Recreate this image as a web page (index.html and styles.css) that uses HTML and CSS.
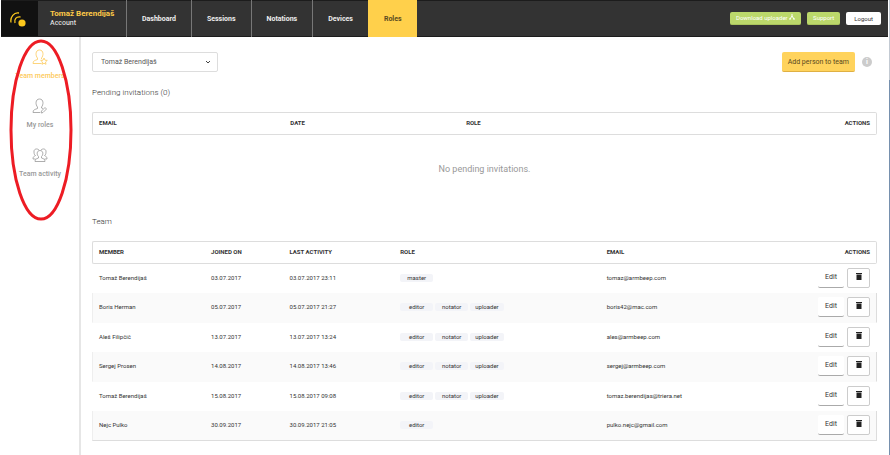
FILE: index.html
```
<!DOCTYPE html>
<html lang="en">
<head>
    <meta charset="UTF-8">
    <meta name="viewport" content="width=device-width, initial-scale=1.0">
    <title>Roles - Team members</title>
    <link rel="stylesheet" href="styles.css">
</head>
<body>
    <header class="topbar">
        <a href="#" class="logo" aria-label="Home">
            <svg width="16" height="16" viewBox="0 0 16 16" fill="none" stroke="#fcc81c">
                <circle cx="12" cy="12" r="3.6" fill="#fcc81c" stroke="none"/>
                <path d="M1 11.5C0 6 4 1 9 2" stroke-width="1.3"/>
                <path d="M5 12C4 8 6 5.5 10.5 6" stroke-width="1.3"/>
            </svg>
        </a>
        <div class="account">
            <strong>Tomaž Berendijaš</strong>
            <span>Account</span>
        </div>
        <nav class="menu">
            <a href="#">Dashboard</a>
            <a href="#">Sessions</a>
            <a href="#">Notations</a>
            <a href="#">Devices</a>
            <a href="#" class="active">Roles</a>
        </nav>
        <div class="tools">
            <button type="button" class="btn btn-green">Download uploader
                <svg width="6" height="6" viewBox="0 0 6 6" fill="none" stroke="currentColor"><path d="M3 0V2L1 5M3 2L5 5M0 5H2M4 5H6"/></svg>
            </button>
            <button type="button" class="btn btn-green">Support</button>
            <button type="button" class="btn btn-white">Logout</button>
        </div>
    </header>

    <div class="layout">
        <aside class="sidebar">
            <a href="#" class="active">
                <svg width="16" height="16" viewBox="0 0 16 16" fill="none" stroke="currentColor" stroke-width="0.8">
                    <path d="M9.5 14.5H1C1 11.5 3 11.5 5.5 10.5V9C3.5 7 3 1 7.5 1C12 1 11.5 7 9.5 9V10"/>
                    <path d="M12 9L13 11.2L15.3 11.4L13.5 13L14 15.3L12 14.2L10 15.3L10.5 13L8.7 11.4L11 11.2Z"/>
                </svg>
                <span>Team members</span>
            </a>
            <a href="#">
                <svg width="16" height="16" viewBox="0 0 16 16" fill="none" stroke="currentColor" stroke-width="0.8">
                    <path d="M8 14.5H1C1 11.5 3 11.5 5.5 10.5V9C3.5 7 3 1 7.5 1C12 1 11.5 7 9.5 9V10L11 10.5"/>
                    <path d="M9 15L9.5 13L13 9.5L14.5 11L11 14.5Z"/>
                </svg>
                <span>My roles</span>
            </a>
            <a href="#">
                <svg width="16" height="16" viewBox="0 0 16 16" fill="none" stroke="currentColor" stroke-width="0.8">
                    <path d="M3 14.5C3 12 4 12 6.5 11V9.5C4.5 8 4.5 3.5 8 3.5C11.5 3.5 11.5 8 9.5 9.5V11C12 12 13 12 13 14.5Z"/>
                    <path d="M7 3C5 1 1.5 2 2 5C2 7 2.5 8 3.5 8.5C2 9.5 1 9.5 1 12H3.5M9 3C11 1 14.5 2 14 5C14 7 13.5 8 12.5 8.5C14 9.5 15 9.5 15 12H12.5"/>
                </svg>
                <span>Team activity</span>
            </a>
        </aside>
        <svg class="marker" width="64" height="184" viewBox="0 0 64 184"><ellipse cx="32" cy="91" rx="30" ry="89"/></svg>

        <main>
            <div class="filters">
                <div class="select">
                    <select aria-label="Team">
                        <option>Tomaž Berendijaš</option>
                    </select>
                    <svg width="6" height="4" viewBox="0 0 6 4" fill="none" stroke="#444"><path d="M1 1L3 3L5 1"/></svg>
                </div>
                <button type="button" class="btn btn-yellow">Add person to team</button>
                <span class="info">i</span>
            </div>

            <h2>Pending invitations (0)</h2>
            <table class="pending">
                <thead>
                    <tr>
                        <th>Email</th>
                        <th>Date</th>
                        <th>Role</th>
                        <th>Actions</th>
                    </tr>
                </thead>
            </table>
            <p class="empty">No pending invitations.</p>

            <h2>Team</h2>
            <table class="team">
                <thead>
                    <tr>
                        <th>Member</th>
                        <th>Joined on</th>
                        <th>Last activity</th>
                        <th>Role</th>
                        <th>Email</th>
                        <th>Actions</th>
                    </tr>
                </thead>
                <tbody id="teamRows"></tbody>
            </table>
        </main>
    </div>

    <script src="team.js"></script>
</body>
</html>
```
FILE: team.js
```
const team = [
    ['Tomaž Berendijaš', '03.07.2017', '23:11', ['master'], 'tomaz@armbeep.com'],
    ['Boris Herman', '05.07.2017', '21:27', ['editor', 'notator', 'uploader'], 'boris42@mac.com'],
    ['Aleš Filipčič', '13.07.2017', '13:24', ['editor', 'notator', 'uploader'], 'ales@armbeep.com'],
    ['Sergej Prosen', '14.08.2017', '13:46', ['editor', 'notator', 'uploader'], 'sergej@armbeep.com'],
    ['Tomaž Berendijaš', '15.08.2017', '09:08', ['editor', 'notator', 'uploader'], 'tomaz.berendijas@triera.net'],
    ['Nejc Pulko', '30.09.2017', '21:05', ['editor'], 'pulko.nejc@gmail.com']
];

const rows = document.getElementById('teamRows');

team.forEach(([name, date, time, roles, email]) => {
    const row = document.createElement('tr');
    row.innerHTML = `
        <td>${name}</td>
        <td>${date}</td>
        <td>${date} ${time}</td>
        <td><div class="tags">${roles.map(role => `<span class="tag">${role}</span>`).join('')}</div></td>
        <td>${email}</td>
        <td>
            <div class="actions">
                <button type="button" class="btn btn-edit">Edit</button>
                <button type="button" class="btn btn-delete" aria-label="Delete">
                    <svg width="6" height="7" viewBox="0 0 6 7" fill="#222"><path d="M0 0H6V1H0ZM0.5 1.5H5.5V7H0.5Z"/></svg>
                </button>
            </div>
        </td>
    `;
    rows.appendChild(row);
});
```
FILE: styles.css
```
* {
    box-sizing: border-box;
}
body {
    margin: 0;
    padding: 0 2px 0 1px;
    min-height: 100vh;
    font-family: Roboto, sans-serif;
    font-size: 6px;
    line-height: 8px;
    color: #333;
    background: linear-gradient(#c3cad3 80px, #7690ae 80px) right top / 1px 100% no-repeat #fff;
}
a {
    color: inherit;
    text-decoration: none;
}
button, select {
    font-family: inherit;
}
.topbar {
    display: flex;
    height: 37px;
    background-color: #333;
    border-top: 1px solid #1c1c1c;
    border-bottom: 1px solid #1c1c1c;
}
.logo {
    display: flex;
    align-items: center;
    justify-content: center;
    width: 37px;
    background-color: #111;
}
.logo svg {
    margin-right: 4px;
}
.account {
    display: flex;
    flex-direction: column;
    justify-content: center;
    width: 88px;
    padding: 0 0 2px 12px;
    font-size: 7px;
    font-weight: 500;
    white-space: nowrap;
    color: #ddd;
}
.account strong {
    font-size: 8px;
    line-height: 10px;
    color: #fdca48;
}
.menu {
    display: flex;
    margin: -1px 0;
}
.menu a {
    display: flex;
    align-items: center;
    padding: 0 15px;
    border-left: 1px solid #777;
    font-size: 7px;
    font-weight: bold;
    color: #eee;
}
.menu a.active {
    border-left-color: #ffd04b;
    background-color: #ffd04b;
    color: #5a4a20;
}
.tools {
    display: flex;
    align-items: center;
    gap: 6px;
    margin-left: auto;
    padding-right: 7px;
}
.btn {
    padding: 0 6px;
    border: 0;
    border-radius: 2px;
    font-size: 6px;
    line-height: 8px;
    white-space: nowrap;
    cursor: pointer;
}
.btn-green {
    height: 13px;
    background-color: #bbd86b;
    border-bottom: 1px solid #a9c45c;
    color: #fff;
}
.btn-white {
    height: 13px;
    padding: 0 8px;
    background-color: #fff;
    color: #333;
}
.layout {
    display: flex;
    position: relative;
    min-height: calc(100vh - 37px);
}
.sidebar {
    display: flex;
    flex-direction: column;
    gap: 18px;
    width: 80px;
    padding-top: 12px;
    border-right: 2px solid #e6e6e6;
    font-size: 7px;
    font-weight: 500;
    color: #999;
}
.sidebar a {
    display: flex;
    flex-direction: column;
    align-items: center;
    gap: 7px;
}
.sidebar .active {
    color: #fdca5c;
}
.marker {
    position: absolute;
    top: 2px;
    left: 8px;
    fill: none;
    stroke: #ed1c24;
    stroke-width: 3;
    pointer-events: none;
}
main {
    flex: 1;
    padding: 15px 11px 14px;
}
.filters {
    display: flex;
    align-items: center;
    height: 20px;
    margin-bottom: 14px;
}
.select {
    display: flex;
    align-items: center;
    width: 126px;
}
.select select {
    width: 100%;
    height: 20px;
    padding: 0 8px;
    border: 1px solid #ddd;
    border-radius: 2px;
    background-color: #fff;
    appearance: none;
    font-size: 7px;
    color: #555;
}
.select svg {
    margin-left: -13px;
    pointer-events: none;
}
.btn-yellow {
    height: 20px;
    margin-left: auto;
    border-bottom: 1px solid #dfb043;
    background-color: #ffd35c;
    font-size: 7px;
    color: #5a4a20;
}
.info {
    width: 10px;
    height: 10px;
    margin: 0 5px 0 7px;
    border-radius: 50%;
    background-color: #ccc;
    font-size: 7px;
    font-weight: bold;
    line-height: 10px;
    text-align: center;
    color: #fff;
}
h2 {
    margin: 0 0 13px;
    font-size: 8px;
    font-weight: 300;
    line-height: 13px;
    color: #333;
}
table {
    width: 100%;
    border-spacing: 0;
    table-layout: fixed;
}
th, td {
    padding: 0 6px 2px;
    text-align: left;
}
th {
    height: 23px;
    border: solid #ddd;
    border-width: 1px 0;
    font-weight: bold;
    text-transform: uppercase;
}
th:first-child {
    border-left-width: 1px;
    border-radius: 2px 0 0 2px;
}
th:last-child {
    border-right-width: 1px;
    border-radius: 0 2px 2px 0;
    text-align: right;
}
.pending th:nth-child(1) {
    width: 24.5%;
}
.pending th:nth-child(2) {
    width: 22.4%;
}
.team th:nth-child(1) {
    width: 14.4%;
}
.team th:nth-child(2) {
    width: 10%;
}
.team th:nth-child(3) {
    width: 14.1%;
}
.team th:nth-child(4) {
    width: 26.3%;
}
.empty {
    margin: 28px 0 40px;
    font-size: 9px;
    line-height: 12px;
    text-align: center;
    color: #999;
}
td {
    height: 29px;
}
td:first-child {
    border-left: 1px solid transparent;
}
td:last-child {
    border-right: 1px solid transparent;
}
tbody tr:nth-child(even) td {
    height: 30px;
    background-color: #fafafa;
    border-bottom: 1px solid #fafafa;
}
tbody tr:nth-child(even) td:first-child {
    border-left-color: #eee;
}
tbody tr:nth-child(even) td:last-child {
    border-right-color: #ddd;
}
tbody tr:last-child:nth-child(even) td {
    border-bottom-color: #ddd;
}
.tags {
    display: flex;
    gap: 2px;
}
.tag {
    min-width: 33px;
    padding: 0 5px;
    border-radius: 2px;
    background-color: #f3f4f8;
    text-align: center;
}
.actions {
    display: flex;
    justify-content: flex-end;
    gap: 3px;
}
.btn-edit, .btn-delete {
    height: 20px;
    background-color: #fff;
    font-size: 7px;
    color: #333;
}
.btn-edit {
    width: 26px;
    border-bottom: 1px solid #aaa;
}
.btn-delete {
    width: 23px;
    border: 1px solid #ccc;
}
```
